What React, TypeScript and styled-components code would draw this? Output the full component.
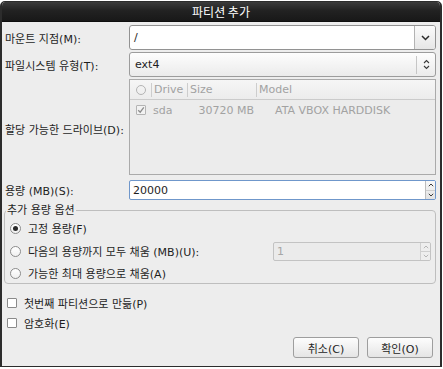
import * as React from "react";
import styled, { createGlobalStyle } from "styled-components";

const GlobalStyle = createGlobalStyle`
  html, body {
    margin: 0;
    padding: 0;
    background: #ffffff;
  }
  body {
    font-family: "DejaVu Sans", "Noto Sans CJK KR", sans-serif;
    font-size: 11px;
    color: #1e1e1e;
  }
  * {
    box-sizing: border-box;
  }
`;

const Window = styled.div`
  width: 442px;
  height: 366px;
  margin-top: 1px;
  display: flex;
  flex-direction: column;
  background: #ededed;
  border: 1px solid #2c2c2c;
  border-left-width: 2px;
  border-right-width: 2px;
  border-radius: 5px 5px 0 0;
  overflow: hidden;
`;

const TitleBar = styled.div`
  height: 20px;
  flex: none;
  display: flex;
  align-items: center;
  justify-content: center;
  background: linear-gradient(#3b3b3b, #222222 45%, #181818);
  border-bottom: 1px solid #0f0f0f;
  color: #ffffff;
  font-family: "Noto Sans CJK KR", "DejaVu Sans", sans-serif;
  font-size: 12px;
`;

const Content = styled.div`
  flex: 1;
  display: flex;
  flex-direction: column;
  padding: 3px 4px 0 2px;
`;

const FormGrid = styled.div`
  display: grid;
  grid-template-columns: 125px 307px;
  grid-template-rows: 25px 25px 99px 20px;
  row-gap: 2px;
  align-items: center;
`;

const FieldLabel = styled.div`
  white-space: nowrap;
  padding-left: 1px;
`;

const ComboEntry = styled.div`
  height: 25px;
  display: flex;
  border: 1px solid #929292;
  border-radius: 3px;
  background: #ffffff;
  overflow: hidden;
`;

const EntryText = styled.div`
  flex: 1;
  display: flex;
  align-items: center;
  padding-left: 4px;
`;

const ComboArrow = styled.div`
  width: 21px;
  display: flex;
  align-items: center;
  justify-content: center;
  border-left: 1px solid #b3b3b3;
  background: linear-gradient(#fbfbfb, #e6e6e6);
`;

const ComboBox = styled.div`
  height: 25px;
  display: flex;
  align-items: center;
  padding-left: 5px;
  border: 1px solid #9c9c9c;
  border-radius: 3px;
  background: linear-gradient(#fdfdfd, #ebebeb);
`;

const ComboValue = styled.div`
  flex: 1;
`;

const ComboSep = styled.div`
  width: 1px;
  height: 18px;
  background: #c6c6c6;
`;

const ComboIcon = styled.div`
  width: 18px;
  display: flex;
  align-items: center;
  justify-content: center;
`;

const DriveList = styled.div`
  align-self: start;
  height: 96px;
  border: 1px solid #aaaaaa;
  background: #ececec;
  color: #a2a2a2;
`;

const DriveHeader = styled.div`
  height: 20px;
  display: flex;
  align-items: center;
  border-bottom: 1px solid #cbcbcb;
  background: linear-gradient(#f6f6f6, #ececec);
`;

const HeaderCell = styled.div<{ $w?: number; $last?: boolean }>`
  ${(p) => (p.$w ? `width: ${p.$w}px;` : "flex: 1;")}
  height: 14px;
  display: flex;
  align-items: center;
  justify-content: ${(p) => (p.$w === 22 ? "center" : "flex-start")};
  padding-left: ${(p) => (p.$w === 22 ? 0 : 2)}px;
  border-right: ${(p) => (p.$last ? "none" : "1px solid #cdcdcd")};
`;

const DriveRow = styled.div`
  height: 20px;
  display: flex;
  align-items: center;
`;

const RowCell = styled.div<{ $w?: number; $align?: string; $pad?: number }>`
  ${(p) => (p.$w ? `width: ${p.$w}px;` : "flex: 1;")}
  display: flex;
  justify-content: ${(p) => p.$align || "flex-start"};
  padding-left: ${(p) => (p.$align ? 0 : p.$pad ?? 0)}px;
  padding-right: ${(p) => (p.$align === "flex-end" ? p.$pad ?? 0 : 0)}px;
  white-space: nowrap;
`;

const HeaderRadio = styled.span`
  width: 10px;
  height: 10px;
  border: 1px solid #b4b4b4;
  border-radius: 50%;
`;

const SmallCheck = styled.span<{ $disabled?: boolean }>`
  width: 10px;
  height: 10px;
  display: flex;
  align-items: center;
  justify-content: center;
  border: 1px solid ${(p) => (p.$disabled ? "#b4b4b4" : "#8a8a8a")};
  border-radius: 1px;
  background: ${(p) => (p.$disabled ? "#f2f2f2" : "#ffffff")};
`;

const SpinBox = styled.div<{ $focus?: boolean; $disabled?: boolean }>`
  height: ${(p) => (p.$disabled ? 19 : 20)}px;
  display: flex;
  border: 1px solid
    ${(p) => (p.$focus ? "#6f97cb" : p.$disabled ? "#c3c3c3" : "#969696")};
  border-radius: 2px;
  background: ${(p) => (p.$disabled ? "#ebebeb" : "#ffffff")};
  color: ${(p) => (p.$disabled ? "#a6a6a6" : "inherit")};
  overflow: hidden;
`;

const SpinText = styled.div`
  flex: 1;
  display: flex;
  align-items: center;
  padding-left: 3px;
`;

const SpinButtons = styled.div<{ $disabled?: boolean }>`
  width: 10px;
  display: flex;
  flex-direction: column;
  border-left: 1px solid ${(p) => (p.$disabled ? "#d0d0d0" : "#bdbdbd")};
  background: ${(p) =>
    p.$disabled ? "#eeeeee" : "linear-gradient(#f8f8f8, #e2e2e2)"};
`;

const SpinHalf = styled.div<{ $top?: boolean }>`
  flex: 1;
  display: flex;
  align-items: center;
  justify-content: center;
  border-bottom: ${(p) => (p.$top ? "1px solid #cfcfcf" : "none")};
`;

const Frame = styled.fieldset`
  margin: 4px 0 0 0;
  padding: 0;
  min-width: 0;
  border: 1px solid #bebebe;
  border-radius: 4px;
`;

const Legend = styled.legend`
  margin-left: 1px;
  padding: 0 1px;
  line-height: 13px;
`;

const OptionRow = styled.div<{ $h: number }>`
  height: ${(p) => p.$h}px;
  display: flex;
  align-items: center;
  padding-left: 5px;
  padding-right: 4px;
`;

const Radio = styled.span<{ $on?: boolean }>`
  width: 11px;
  height: 11px;
  margin-right: 7px;
  display: flex;
  align-items: center;
  justify-content: center;
  border: 1px solid #8c8c8c;
  border-radius: 50%;
  background: linear-gradient(#ffffff, #f0f0f0);

  &::after {
    content: "";
    display: ${(p) => (p.$on ? "block" : "none")};
    width: 5px;
    height: 5px;
    border-radius: 50%;
    background: #2a2a2a;
  }
`;

const FillSpin = styled.div`
  margin-left: auto;
  width: 158px;
`;

const CheckRow = styled.div<{ $top: number }>`
  height: 20px;
  margin-top: ${(p) => p.$top}px;
  display: flex;
  align-items: center;
  padding-left: 3px;

  ${SmallCheck} {
    margin-right: 7px;
  }
`;

const ButtonRow = styled.div`
  margin-top: 4px;
  padding-right: 3px;
  display: flex;
  justify-content: flex-end;
  gap: 8px;
`;

const DialogButton = styled.div`
  width: 66px;
  height: 21px;
  display: flex;
  align-items: center;
  justify-content: center;
  border: 1px solid #9e9e9e;
  border-radius: 3px;
  background: linear-gradient(#fdfdfd, #e5e5e5);
`;

const ChevronDown = () => (
  <svg width="9" height="6" viewBox="0 0 9 6">
    <path d="M1 1 L4.5 4.5 L8 1" fill="none" stroke="#2a2a2a" strokeWidth="1.5" />
  </svg>
);

const UpDown = () => (
  <svg width="7" height="11" viewBox="0 0 7 11">
    <path d="M1 4 L3.5 1.5 L6 4" fill="none" stroke="#3a3a3a" strokeWidth="1.1" />
    <path d="M1 7 L3.5 9.5 L6 7" fill="none" stroke="#3a3a3a" strokeWidth="1.1" />
  </svg>
);

const SpinArrow = ({ up, color }: { up?: boolean; color: string }) => (
  <svg width="6" height="4" viewBox="0 0 6 4">
    <path
      d={up ? "M0.8 3.2 L3 1 L5.2 3.2" : "M0.8 0.8 L3 3 L5.2 0.8"}
      fill="none"
      stroke={color}
      strokeWidth="1"
    />
  </svg>
);

const Tick = () => (
  <svg width="8" height="8" viewBox="0 0 8 8">
    <path d="M1.2 4.2 L3.2 6.2 L6.8 1.3" fill="none" stroke="#8d8d8d" strokeWidth="1.3" />
  </svg>
);

const Spin = ({
  value,
  focus,
  disabled,
}: {
  value: string;
  focus?: boolean;
  disabled?: boolean;
}) => {
  const c = disabled ? "#b5b5b5" : "#3a3a3a";
  return (
    <SpinBox $focus={focus} $disabled={disabled}>
      <SpinText>{value}</SpinText>
      <SpinButtons $disabled={disabled}>
        <SpinHalf $top>
          <SpinArrow up color={c} />
        </SpinHalf>
        <SpinHalf>
          <SpinArrow color={c} />
        </SpinHalf>
      </SpinButtons>
    </SpinBox>
  );
};

export default function App() {
  return (
    <>
      <GlobalStyle />
      <Window>
        <TitleBar>파티션 추가</TitleBar>
        <Content>
          <FormGrid>
            <FieldLabel>마운트 지점(M):</FieldLabel>
            <ComboEntry>
              <EntryText>/</EntryText>
              <ComboArrow>
                <ChevronDown />
              </ComboArrow>
            </ComboEntry>

            <FieldLabel>파일시스템 유형(T):</FieldLabel>
            <ComboBox>
              <ComboValue>ext4</ComboValue>
              <ComboSep />
              <ComboIcon>
                <UpDown />
              </ComboIcon>
            </ComboBox>

            <FieldLabel>할당 가능한 드라이브(D):</FieldLabel>
            <DriveList>
              <DriveHeader>
                <HeaderCell $w={22}>
                  <HeaderRadio />
                </HeaderCell>
                <HeaderCell $w={36}>Drive</HeaderCell>
                <HeaderCell $w={69}>Size</HeaderCell>
                <HeaderCell $last>Model</HeaderCell>
              </DriveHeader>
              <DriveRow>
                <RowCell $w={22} $align="center">
                  <SmallCheck $disabled>
                    <Tick />
                  </SmallCheck>
                </RowCell>
                <RowCell $w={36} $pad={1}>
                  sda
                </RowCell>
                <RowCell $w={69} $align="flex-end" $pad={3}>
                  30720 MB
                </RowCell>
                <RowCell $pad={18}>ATA VBOX HARDDISK</RowCell>
              </DriveRow>
            </DriveList>

            <FieldLabel>용량 (MB)(S):</FieldLabel>
            <Spin value="20000" focus />
          </FormGrid>

          <Frame>
            <Legend>추가 용량 옵션</Legend>
            <OptionRow $h={22}>
              <Radio $on />
              고정 용량(F)
            </OptionRow>
            <OptionRow $h={24}>
              <Radio />
              다음의 용량까지 모두 채움 (MB)(U):
              <FillSpin>
                <Spin value="1" disabled />
              </FillSpin>
            </OptionRow>
            <OptionRow $h={20}>
              <Radio />
              가능한 최대 용량으로 채움(A)
            </OptionRow>
          </Frame>

          <CheckRow $top={9}>
            <SmallCheck />
            첫번째 파티션으로 만듦(P)
          </CheckRow>
          <CheckRow $top={0}>
            <SmallCheck />
            암호화(E)
          </CheckRow>

          <ButtonRow>
            <DialogButton>취소(C)</DialogButton>
            <DialogButton>확인(O)</DialogButton>
          </ButtonRow>
        </Content>
      </Window>
    </>
  );
}
